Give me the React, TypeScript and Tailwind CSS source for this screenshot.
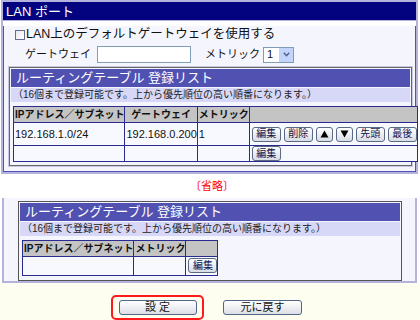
import React from "react";

const font = { fontFamily: '"Liberation Sans", "Noto Sans CJK JP", sans-serif' };

function Btn({ children, w = "w-[29px]" }: { children: React.ReactNode; w?: string }) {
  return (
    <div
      className={`${w} h-[15px] shrink-0 flex items-center justify-center rounded-[3px] border border-[#5a6a86] bg-gradient-to-b from-white to-[#d8dce4] text-[10px] leading-none text-[#10104a]`}
    >
      {children}
    </div>
  );
}

function Tri({ up }: { up?: boolean }) {
  return (
    <svg width="9" height="8" viewBox="0 0 9 8">
      {up ? <polygon points="4.5,0.5 8.5,7.5 0.5,7.5" fill="#000" /> : <polygon points="0.5,0.5 8.5,0.5 4.5,7.5" fill="#000" />}
    </svg>
  );
}

function BoxHeader() {
  return (
    <>
      <div className="h-[18px] bg-[#5151b2] text-white text-[13px] leading-[18px] pl-[5px] whitespace-nowrap">
        ルーティングテーブル&nbsp;登録リスト
      </div>
      <div className="h-[14px] mt-[1px] bg-[#d7d7f7] text-[10px] leading-[14px] pl-[2px] text-[#222] whitespace-nowrap">
        （16個まで登録可能です。上から優先順位の高い順番になります。）
      </div>
    </>
  );
}

export default function App() {
  const th = "border border-[#2a2a90] bg-[#c4c4c4] text-[10px] font-bold text-[#111] h-[15px] p-0 whitespace-nowrap";
  const td = "border border-[#2a2a90] text-[11px] text-[#111] p-0 pl-[1px] whitespace-nowrap";
  return (
    <div className="w-[420px] h-[320px] bg-white overflow-hidden flex flex-col" style={font}>
      {/* Panel 1 */}
      <div className="ml-[1px] w-[417px] border-2 border-[#b3b3de]">
        <div className="h-[19px] bg-[#03037f] text-white text-[13px] leading-[19px] pl-[3px] border-b border-[#b3b3de]">
          LAN ポート
        </div>
        <div className="border-x border-b border-[#5252b4] bg-[#f5f6fd] pb-[5px]">
          <div className="flex items-center h-[17px] mt-[5px] pl-[11px] text-[12.5px] text-[#111] whitespace-nowrap">
            <div className="w-[10px] h-[10px] shrink-0 border border-[#6b6b90] bg-gradient-to-br from-[#e8e8ee] to-white mr-[1px]" />
            LAN上のデフォルトゲートウェイを使用する
          </div>
          <div className="flex items-center h-[17px] mt-[3px] text-[11px] text-[#111] whitespace-nowrap">
            <span className="ml-[21px] w-[72px] shrink-0">ゲートウェイ</span>
            <div className="w-[94px] h-[17px] shrink-0 border border-[#7f9db9] bg-white" />
            <span className="ml-[14px] w-[58px] shrink-0">メトリック</span>
            <div className="w-[31px] h-[16px] shrink-0 border border-[#7f9db9] bg-white flex items-center">
              <span className="text-[11px] pl-[3px] flex-1 leading-none">1</span>
              <div className="w-[14px] h-[14px] bg-[#c3d3fb] flex items-center justify-center">
                <svg width="7" height="5" viewBox="0 0 7 5">
                  <polyline points="0.8,0.8 3.5,3.8 6.2,0.8" fill="none" stroke="#4d6185" strokeWidth="1.4" />
                </svg>
              </div>
            </div>
          </div>
          <div className="ml-[5px] mt-[4px] w-[403px] border border-[#666] shadow-[0_0_0_1px_#c8c8e0] bg-[#f5f6fd] p-[1px] pb-[3px]">
            <BoxHeader />
            <div className="mt-[4px] pl-[2px]">
              <table className="border-collapse w-[396px] bg-[#f8f9ff]">
                <tbody>
                  <tr>
                    <th className={`${th} w-[105px] text-left pl-[1px]`}>IPアドレス／サブネット</th>
                    <th className={`${th} w-[73px] text-center`}>ゲートウェイ</th>
                    <th className={`${th} w-[44px] text-left pl-[1px]`}>メトリック</th>
                    <th className={th}></th>
                  </tr>
                  <tr className="h-[23px]">
                    <td className={td}>192.168.1.0/24</td>
                    <td className={td}>192.168.0.200</td>
                    <td className={td}>1</td>
                    <td className="border border-[#2a2a90] p-0 pl-[2px]">
                      <div className="flex gap-[3px]">
                        <Btn>編集</Btn>
                        <Btn>削除</Btn>
                        <Btn w="w-[17px]"><Tri up /></Btn>
                        <Btn w="w-[17px]"><Tri /></Btn>
                        <Btn>先頭</Btn>
                        <Btn>最後</Btn>
                      </div>
                    </td>
                  </tr>
                  <tr className="h-[16px]">
                    <td className={td}></td>
                    <td className={td}></td>
                    <td className={td}></td>
                    <td className="border border-[#2a2a90] p-0 pl-[2px]">
                      <Btn>編集</Btn>
                    </td>
                  </tr>
                </tbody>
              </table>
            </div>
          </div>
        </div>
      </div>

      {/* omitted */}
      <div className="h-[24px] flex items-center justify-center text-[11px] text-[#ff0000] pl-[4px]">〔省略〕</div>

      {/* Panel 2 (continuation) */}
      <div className="ml-[2px] w-[415px] h-[86px] border-x-2 border-b-2 border-[#b3b3de] bg-[#f5f6fd] pt-[3px]">
        <div className="ml-[14px] w-[384px] border border-[#555] bg-[#f5f6fd] p-[1px] pb-[4px]">
          <BoxHeader />
          <div className="mt-[4px] pl-[2px]">
            <table className="border-collapse w-[183px] bg-[#f8f9ff]">
              <tbody>
                <tr>
                  <th className={`${th} w-[105px] text-left pl-[1px]`}>IPアドレス／サブネット</th>
                  <th className={`${th} w-[44px] text-left pl-[1px]`}>メトリック</th>
                  <th className={th}></th>
                </tr>
                <tr className="h-[19px]">
                  <td className={td}></td>
                  <td className={td}></td>
                  <td className="border border-[#2a2a90] p-0 pl-[2px]">
                    <Btn>編集</Btn>
                  </td>
                </tr>
              </tbody>
            </table>
          </div>
        </div>
      </div>

      {/* bottom bar */}
      <div className="flex-1 bg-[#fdfdf0] flex items-start pt-[12px]">
        <div className="ml-[111px] w-[93px] h-[25px] border-2 border-[#ff1a1a] rounded-[5px] flex items-center justify-center">
          <div className="w-[78px] h-[15px] border border-[#4f6784] rounded-[3px] bg-gradient-to-b from-white to-[#dcdfe6] text-[11px] leading-none flex items-center justify-center text-[#111]">
            設&nbsp;定
          </div>
        </div>
        <div className="ml-[19px] mt-[5px] w-[79px] h-[15px] border border-[#4f6784] rounded-[3px] bg-gradient-to-b from-white to-[#dcdfe6] text-[11px] leading-none flex items-center justify-center text-[#111]">
          元に戻す
        </div>
      </div>
    </div>
  );
}
